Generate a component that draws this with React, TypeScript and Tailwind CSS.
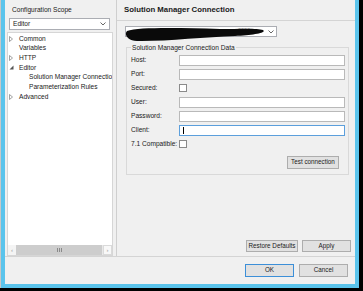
import React from "react";

function Chevron({ className }: { className?: string }) {
  return (
    <svg width="6" height="4" viewBox="0 0 6 4" className={className}>
      <path d="M0.5 0.5 L3 3 L5.5 0.5" fill="none" stroke="#555" strokeWidth="0.9" />
    </svg>
  );
}

function Collapsed() {
  return (
    <svg width="4" height="6" viewBox="0 0 4 6">
      <path d="M0.5 0.5 L3.5 3 L0.5 5.5 Z" fill="none" stroke="#8a8a8a" strokeWidth="0.8" />
    </svg>
  );
}

function Expanded() {
  return (
    <svg width="5" height="5" viewBox="0 0 5 5">
      <path d="M4.5 0.5 L4.5 4.5 L0.5 4.5 Z" fill="#555" />
    </svg>
  );
}

function TreeRow({ label, indent, icon }: { label: string; indent?: boolean; icon?: React.ReactNode }) {
  return (
    <div className="flex h-[9.7px] items-center whitespace-nowrap">
      {indent ? <div className="w-[21px] shrink-0" /> : <div className="flex w-[11px] shrink-0 items-center pl-[1px]">{icon}</div>}
      <span>{label}</span>
    </div>
  );
}

function Field({ label, focused }: { label: string; focused?: boolean }) {
  return (
    <div className="flex h-[14px] items-center">
      <div className="w-[48px] shrink-0 whitespace-nowrap">{label}</div>
      <div
        className={
          focused
            ? "flex h-[11px] flex-1 items-center border border-[#5c9fdc] bg-white pl-[3px]"
            : "h-[11px] flex-1 border border-[#b9b9b9] bg-white"
        }
      >
        {focused && <div className="h-[7px] w-px bg-black" />}
      </div>
    </div>
  );
}

function Check({ label }: { label: string }) {
  return (
    <div className="flex h-[14px] items-center">
      <div className="w-[48px] shrink-0 whitespace-nowrap">{label}</div>
      <div className="h-[8px] w-[8px] border border-[#8a8a8a] bg-white" />
    </div>
  );
}

function Button({ label, className }: { label: string; className: string }) {
  return (
    <div className={"flex items-center justify-center border bg-[#e1e1e1] text-[6.3px] " + className}>
      {label}
    </div>
  );
}

export default function App() {
  return (
    <div className="h-[291px] w-[363px] bg-black font-['Liberation_Sans',sans-serif] text-[6.6px] leading-none text-[#1a1a1a]">
      <div className="h-[288px] w-[359px] border-l border-[#c8c8c8] bg-[#5bc4ec] pb-[4px] pl-[4px] pr-[4px]">
        <div className="flex h-[284px] w-[350px] flex-col bg-[#f0f0f0]">
          <div className="flex h-[257px] border-b border-[#d4d4d4]">
            {/* left: scope + tree */}
            <div className="flex w-[111px] flex-col">
              <div className="mt-[6px] h-[8px] pl-[7px] leading-[8px]">Configuration Scope</div>
              <div className="ml-[4px] mt-[4px] flex h-[12px] w-[101px] items-center justify-between border border-[#abadb3] bg-white pl-[3px] pr-[3px]">
                <span>Editor</span>
                <Chevron />
              </div>
              <div className="ml-[2px] mt-[2px] flex w-[106px] flex-1 flex-col border border-[#d6d6d6] bg-white">
                <div className="flex-1 overflow-hidden pt-[1px]">
                  <TreeRow label="Common" icon={<Collapsed />} />
                  <TreeRow label="Variables" />
                  <TreeRow label="HTTP" icon={<Collapsed />} />
                  <TreeRow label="Editor" icon={<Expanded />} />
                  <TreeRow label="Solution Manager Connection" indent />
                  <TreeRow label="Parameterization Rules" indent />
                  <TreeRow label="Advanced" icon={<Collapsed />} />
                </div>
                <div className="flex h-[10px] bg-[#e8e8e8]">
                  <div className="flex w-[8px] items-center justify-center bg-[#f4f4f4] text-[6px] text-[#9a9a9a]">‹</div>
                  <div className="flex w-[86px] items-center justify-center gap-[1px] bg-[#cdcdcd]">
                    <div className="h-[4px] w-px bg-[#8a8a8a]" />
                    <div className="h-[4px] w-px bg-[#8a8a8a]" />
                    <div className="h-[4px] w-px bg-[#8a8a8a]" />
                  </div>
                  <div className="ml-px flex flex-1 items-center justify-center border border-[#dadada] bg-[#f8f8f8] text-[6px] text-[#9a9a9a]">›</div>
                </div>
              </div>
            </div>

            {/* right: preference page */}
            <div className="flex flex-1 flex-col border-l border-[#cfcfcf]">
              <div className="flex h-[21px] items-center border-b border-[#d4d4d4] pl-[7px] text-[7.8px] font-bold">
                Solution Manager Connection
              </div>
              <div className="relative ml-[8px] mt-[5px] flex h-[11px] w-[152px] items-center justify-end border border-[#abadb3] bg-white pr-[2px]">
                <span className="absolute left-[112px] top-[1px] text-[5.5px] text-[#999]">0000</span>
                <svg width="145" height="15" viewBox="0 0 145 15" className="absolute -left-[1px] top-[0px]">
                  <path
                    d="M2 4 C 14 0, 55 1, 95 2 C 115 2, 132 1, 138 3 C 142 6, 128 8, 110 9 C 80 10, 40 14.5, 12 14 C 2 13.5, -1 7, 2 4 Z"
                    fill="#0a0a0a"
                  />
                </svg>
                <Chevron className="relative" />
              </div>

              <div className="relative ml-[9px] mr-[6px] mt-[10px] flex flex-col border border-[#d9d9d9] pb-[5px] pl-[4px] pr-[3px] pt-[5px]">
                <span className="absolute -top-[4px] left-[4px] bg-[#f0f0f0] px-[1px] leading-[8px]">
                  Solution Manager Connection Data
                </span>
                <Field label="Host:" />
                <Field label="Port:" />
                <Check label="Secured:" />
                <Field label="User:" />
                <Field label="Password:" />
                <Field label="Client:" focused />
                <Check label="7.1 Compatible:" />
                <div className="mr-[6px] mt-[5px] flex justify-end">
                  <Button label="Test connection" className="h-[13px] w-[52px] border-[#adadad]" />
                </div>
              </div>

              <div className="flex-1" />
              <div className="flex justify-end gap-[4px] pb-[4px] pr-[4px]">
                <Button label="Restore Defaults" className="h-[12px] w-[52px] border-[#adadad]" />
                <Button label="Apply" className="h-[12px] w-[49px] border-[#adadad]" />
              </div>
            </div>
          </div>

          {/* dialog buttons */}
          <div className="flex justify-end gap-[5px] pr-[7px] pt-[7px]">
            <Button label="OK" className="h-[13px] w-[49px] border-[#3c8fd8]" />
            <Button label="Cancel" className="h-[13px] w-[49px] border-[#adadad]" />
          </div>
        </div>
      </div>
    </div>
  );
}
